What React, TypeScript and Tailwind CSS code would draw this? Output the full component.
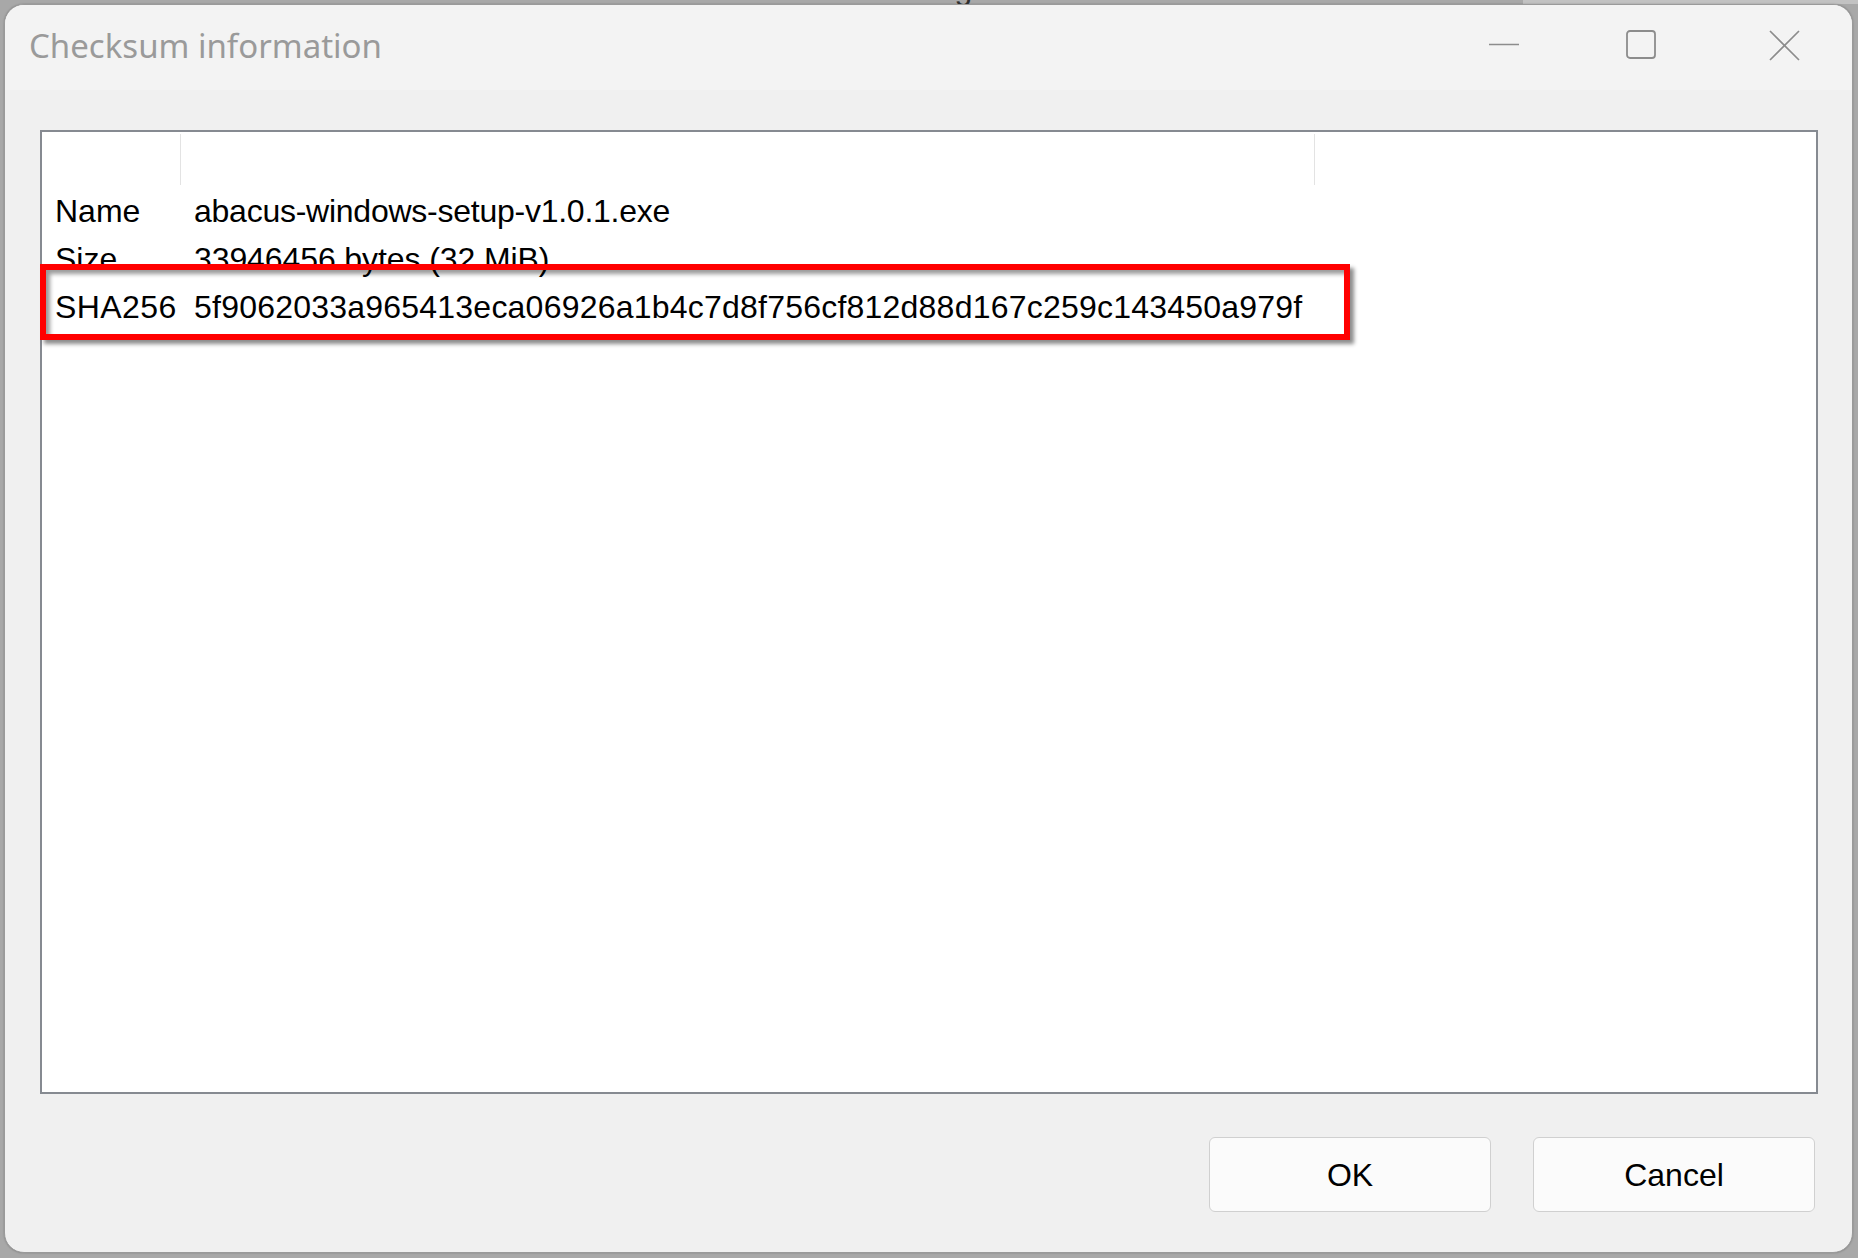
import React from "react";

const body = { fontFamily: '"Liberation Sans", Arial, sans-serif' };
const title = { fontFamily: '"Noto Sans", "Segoe UI", sans-serif' };

export default function App() {
  return (
    <div className="w-[1858px] h-[1258px] bg-[#a8a8a8] flex flex-col overflow-hidden">
      {/* strip of the window behind */}
      <div className="h-[4px] flex overflow-hidden text-[32px] leading-[32px] text-[#303030]" style={body}>
        <div className="w-[1523px] bg-[#a3a3a3] flex -translate-y-[28px]">
          <span className="ml-[34px]">Exe</span>
          <span className="ml-[300px]">10-3-2026 09:27</span>
          <span className="ml-[190px]">Processing</span>
          <span className="ml-[250px]">33.15 MiB</span>
        </div>
        <div className="flex-1 bg-[#c2c2c2]" />
      </div>
      <div className="flex pl-[4px]">
        <div className="w-[1849px] h-[1249px] rounded-[20px] border border-[#9a9a9a] bg-[#f0f0f0] flex flex-col overflow-hidden shadow-[0_0_2px_rgba(0,0,0,0.25)]">
          {/* title bar */}
          <div className="h-[85px] bg-[#f3f3f3] flex items-start">
            <div className="pl-[24px] pt-[17px] text-[33px] leading-[48px] text-[#9a9a9a]" style={title}>
              Checksum information
            </div>
            <div className="ml-auto flex items-start pr-[52px]">
              <svg width="30" height="30" viewBox="0 0 30 30" className="mt-[25px]">
                <line x1="0" y1="14.5" x2="30" y2="14.5" stroke="#8c8c8c" strokeWidth="1.6" />
              </svg>
              <svg width="31" height="30" viewBox="0 0 31 30" className="ml-[107px] mt-[25px]">
                <rect x="1" y="1" width="28" height="27" rx="3" fill="none" stroke="#8c8c8c" strokeWidth="1.8" />
              </svg>
              <svg width="31" height="31" viewBox="0 0 31 31" className="ml-[112px] mt-[25px]">
                <path d="M1 1 L30 30 M30 1 L1 30" stroke="#8c8c8c" strokeWidth="1.7" fill="none" />
              </svg>
            </div>
          </div>

          {/* body */}
          <div className="flex-1 flex flex-col pl-[35px] pr-[34px] pt-[40px]">
            <div className="relative h-[964px] border-2 border-[#868a91] bg-white text-[32px] text-black" style={body}>
              {/* header */}
              <div className="h-[55px] flex">
                <div className="w-[139px] flex items-center justify-end">
                  <div className="w-px h-[51px] bg-[#e3e3e3]" />
                </div>
                <div className="w-[1134px] flex items-center justify-end">
                  <div className="w-px h-[51px] bg-[#e3e3e3]" />
                </div>
              </div>
              {/* rows */}
              <div className="flex h-[48px] leading-[48px] whitespace-nowrap">
                <div className="w-[139px] pl-[13px]">Name</div>
                <div className="pl-[13px] tracking-[-0.25px]">abacus-windows-setup-v1.0.1.exe</div>
              </div>
              <div className="flex h-[48px] leading-[48px] whitespace-nowrap">
                <div className="w-[139px] pl-[13px]">Size</div>
                <div className="pl-[13px] tracking-[-0.1px]">33946456 bytes (32 MiB)</div>
              </div>
              <div className="flex h-[48px] leading-[48px] whitespace-nowrap">
                <div className="w-[139px] pl-[13px] tracking-[0.4px]">SHA256</div>
                <div className="pl-[13px] tracking-[0.22px]">5f9062033a965413eca06926a1b4c7d8f756cf812d88d167c259c143450a979f</div>
              </div>
              {/* annotation */}
              <div className="absolute left-[-2px] top-[132px] w-[1310px] h-[76px] border-[6px] border-[#ff0000] shadow-[4px_4px_4px_rgba(0,0,0,0.45),inset_4px_4px_4px_rgba(0,0,0,0.4)]" />
            </div>

            {/* buttons */}
            <div className="mt-[43px] flex justify-end gap-[42px] pr-[3px]" style={body}>
              <button className="w-[282px] h-[75px] rounded-[6px] border border-[#d0d0d0] bg-[#fbfbfb] text-[32px] text-black">
                OK
              </button>
              <button className="w-[282px] h-[75px] rounded-[6px] border border-[#d0d0d0] bg-[#fbfbfb] text-[32px] text-black">
                Cancel
              </button>
            </div>
          </div>
        </div>
      </div>
    </div>
  );
}
